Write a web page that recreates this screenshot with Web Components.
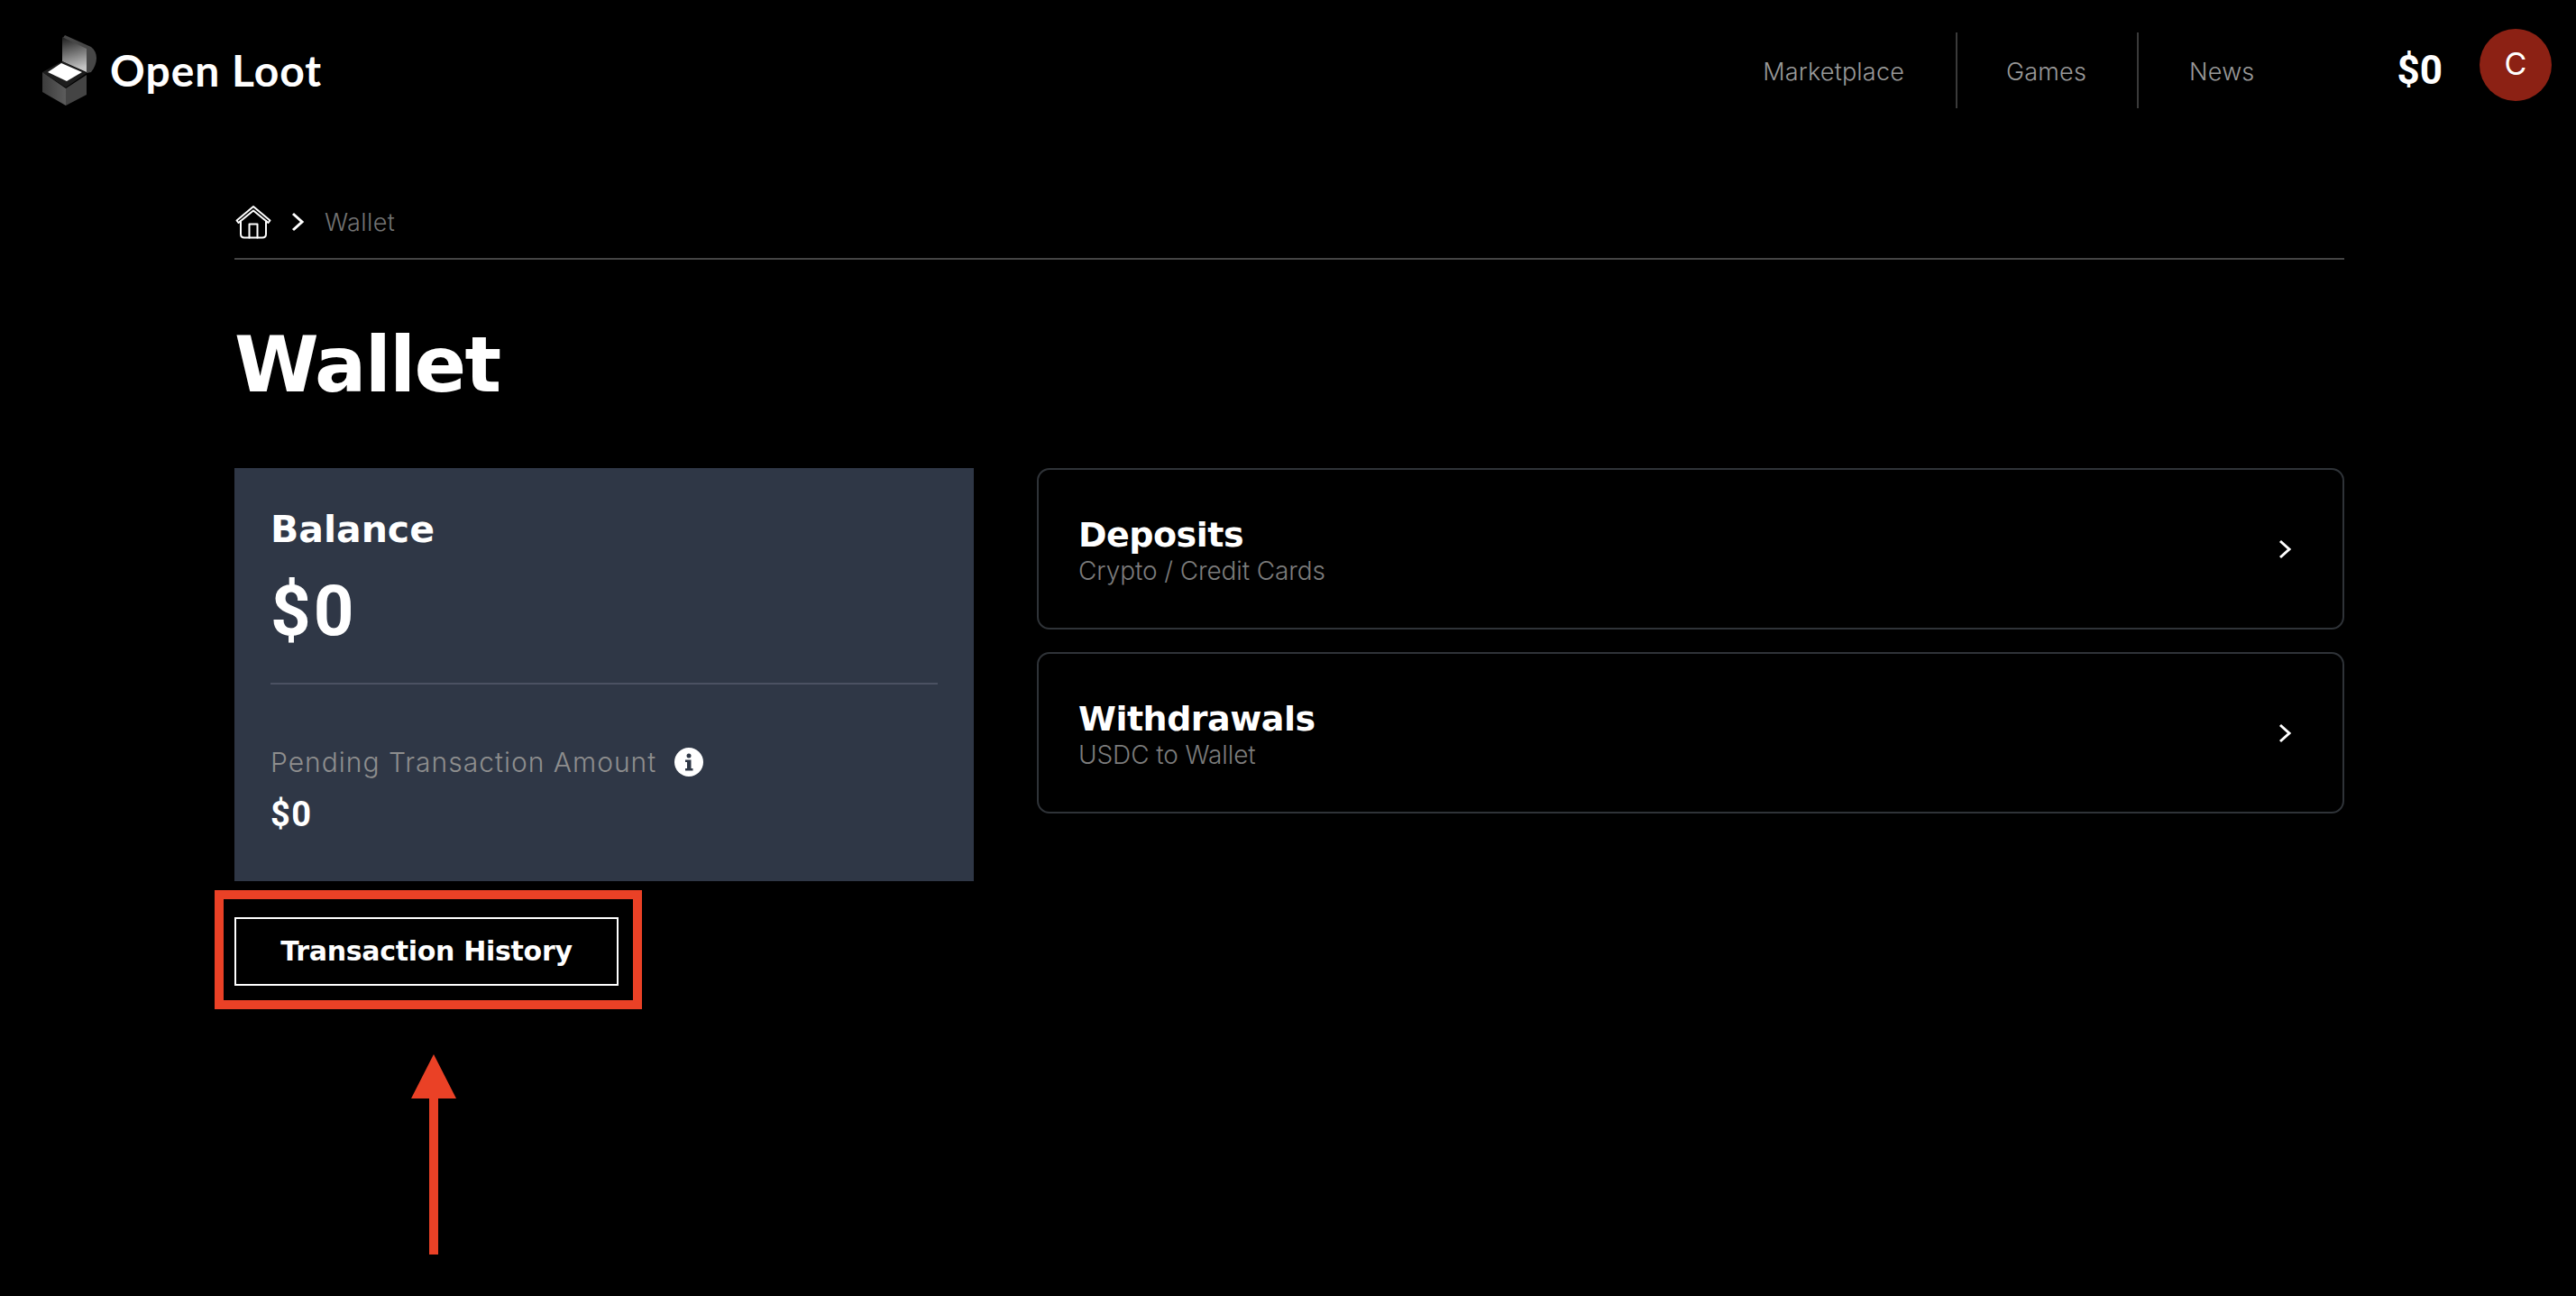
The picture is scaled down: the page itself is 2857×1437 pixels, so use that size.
<!DOCTYPE html>
<html>
<head>
<meta charset="utf-8">
<title>Wallet</title>
<style>
  html,body{margin:0;background:#000;}
  body{position:relative;min-height:1437px;overflow:hidden;font-family:"Inter","Liberation Sans",sans-serif;color:#fff;}
  .page{padding:0 257px 0 260px;}
  .columns{display:grid;grid-template-columns:820px 1fr;column-gap:70px;align-items:start;}
  .right{display:flex;flex-direction:column;gap:25px;}
</style>
</head>
<body>
<site-header></site-header>
<div class="page">
  <bread-crumb>Wallet</bread-crumb>
  <page-title>Wallet</page-title>
  <div class="columns">
    <div>
      <balance-card></balance-card>
      <tx-button>Transaction History</tx-button>
    </div>
    <div class="right">
      <wallet-link title="Deposits" sub="Crypto / Credit Cards"></wallet-link>
      <wallet-link title="Withdrawals" sub="USDC to Wallet"></wallet-link>
    </div>
  </div>
</div>
<call-out></call-out>

<script>
const chevron = `<svg width="15" height="22" viewBox="0 0 15 22" fill="none"><path d="M2 2l10 9-10 9" stroke="#fff" stroke-width="3"/></svg>`;

class SiteHeader extends HTMLElement {
    constructor(){
        super();
        this.attachShadow({mode:'open'});
        this.shadowRoot.innerHTML = `
        <style>
        :host{display:flex;align-items:center;height:156px;padding:0 27px 0 46px;box-sizing:border-box;}
        .logo{display:flex;align-items:center;gap:14px;}
        .logo svg{display:block;margin-top:-1px;}
        .name{font:700 48px/1 "Lato","Liberation Sans",sans-serif;letter-spacing:1px;color:#fff;margin-top:-1px;}
        nav{margin-left:auto;display:flex;align-items:center;height:84px;}
        nav a{display:flex;align-items:center;height:100%;padding:2px 56px 0;box-sizing:border-box;font:300 27px/1 "Inter",sans-serif;letter-spacing:.2px;color:#999;border-right:2px solid #3a3a3a;}
        nav a:first-child{padding-left:0;padding-right:57px;}
        nav a:nth-child(2){padding-left:54px;}
        nav a:last-child{border-right:0;padding-right:0;}
        .amount{margin-left:158px;font:700 44px/1 "Roboto",sans-serif;color:#fff;}
        .avatar{margin-left:41px;margin-top:-12px;width:80px;height:80px;border-radius:50%;background:#8c2114;color:#fff;display:flex;align-items:center;justify-content:center;font:400 34px/1 "Inter",sans-serif;padding-bottom:2px;box-sizing:border-box;}
        </style>
        <div class="logo">
          <svg width="62" height="80" viewBox="46 38 62 80">
            <defs>
              <linearGradient id="lid" x1="0" y1="0" x2="0.2" y2="1"><stop offset="0" stop-color="#1c1c1c"/><stop offset="1" stop-color="#c4c4c4"/></linearGradient>
              <linearGradient id="side" x1="0" y1="0" x2="1" y2="0"><stop offset="0" stop-color="#3c3c3c"/><stop offset="1" stop-color="#5c5c5c"/></linearGradient>
            </defs>
            <path d="M72 39 L101 52 C109 58 109 70 101 80 L96 81 V55 L69 43 Z" fill="#474747"/>
            <path d="M69 41 L96 54 V80 L69 68 Z" fill="url(#lid)"/>
            <path d="M47 80 L69 68 L96 81 L73 97 Z" fill="#1d1d1d"/>
            <path d="M53 80 L68 70 L91 80 L74 90 Z" fill="#fff"/>
            <path d="M47 80 L73 98 V117 L47 102 Z" fill="url(#side)"/>
            <path d="M73 98 L96 83 V105 L73 117 Z" fill="#444"/>
          </svg>
          <span class="name">Open Loot</span>
        </div>
        <nav><a>Marketplace</a><a>Games</a><a>News</a></nav>
        <span class="amount">$0</span>
        <span class="avatar">C</span>
        `;
    }
}

class BreadCrumb extends HTMLElement {
    constructor(){
        super();
        this.attachShadow({mode:'open'});
        this.shadowRoot.innerHTML = `
        <style>
        :host{display:flex;align-items:center;height:132px;padding:72px 0 22px;border-bottom:2px solid #444;box-sizing:border-box;}
        .home{display:block;margin-left:1px;}
        .sep{display:block;margin-left:22px;}
        .cur{margin-left:22px;font:300 27px/1 "Inter",sans-serif;letter-spacing:.4px;color:#737373;}
        </style>
        <svg class="home" width="40" height="38" viewBox="0 0 40 38" fill="none" stroke="#fff" stroke-width="2" stroke-linejoin="round" stroke-linecap="round">
          <path d="M1.5 17.5 L20 2 L38.5 17.5 L36.5 20 L20 6.5 L3.5 20 Z"/>
          <path d="M6 18 V32.5 Q6 36.5 10 36.5 H30 Q34 36.5 34 32.5 V18"/>
          <path d="M15.5 36.5 V21.5 H24.5 V36.5"/>
        </svg>
        <svg class="sep" width="15" height="22" viewBox="0 0 15 22" fill="none"><path d="M2 2l10 9-10 9" stroke="#fff" stroke-width="3"/></svg>
        <span class="cur"><slot></slot></span>
        `;
    }
}

class PageTitle extends HTMLElement {
    constructor(){
        super();
        this.attachShadow({mode:'open'});
        this.shadowRoot.innerHTML = `
        <style>
        :host{display:block;height:231px;padding-top:67px;box-sizing:border-box;}
        h1{margin:0;font:700 85px/100px "DejaVu Sans",sans-serif;letter-spacing:-1.7px;color:#fff;}
        </style>
        <h1><slot></slot></h1>
        `;
    }
}

class BalanceCard extends HTMLElement {
    constructor(){
        super();
        this.attachShadow({mode:'open'});
        this.shadowRoot.innerHTML = `
        <style>
        :host{display:block;height:458px;box-sizing:border-box;padding:0 40px;background:#2f3746;color:#fff;}
        .label{padding-top:43px;font:700 41px/50px "DejaVu Sans",sans-serif;}
        .big{margin-top:26px;font:700 78px/80px "Roboto",sans-serif;letter-spacing:3px;}
        hr{margin:39px 0 0;border:0;border-top:2px solid #4b5162;}
        .pending{display:flex;align-items:center;margin-top:68px;height:36px;font:300 30px/36px "Inter",sans-serif;letter-spacing:1px;color:#8e8e8e;}
        .pending svg{margin-left:20px;display:block;}
        .small{margin-top:20px;font:700 38px/40px "Roboto",sans-serif;letter-spacing:1.5px;}
        </style>
        <div class="label">Balance</div>
        <div class="big">$0</div>
        <hr>
        <div class="pending">Pending Transaction Amount
          <svg width="32" height="32" viewBox="0 0 32 32"><circle cx="16" cy="16" r="16" fill="#fff"/><path d="M13.5 13.5h5v9.5h2v2.5h-8.5V23h2v-7h-2v-2.5z" fill="#2f3746"/><circle cx="16" cy="9" r="2.5" fill="#2f3746"/></svg>
        </div>
        <div class="small">$0</div>
        `;
    }
}

class TxButton extends HTMLElement {
    constructor(){
        super();
        this.attachShadow({mode:'open'});
        this.shadowRoot.innerHTML = `
        <style>
        :host{display:flex;align-items:center;justify-content:center;width:426px;height:76px;margin-top:40px;box-sizing:border-box;border:2px solid #fff;font:700 30px/1 "DejaVu Sans",sans-serif;letter-spacing:-.3px;color:#fff;}
        </style>
        <slot></slot>
        `;
    }
}

class WalletLink extends HTMLElement {
    constructor(){
        super();
        this.attachShadow({mode:'open'});
        this.shadowRoot.innerHTML = `
        <style>
        :host{display:flex;align-items:center;height:179px;box-sizing:border-box;padding:0 56px 0 44px;border:2px solid #2f3338;border-radius:14px;}
        .text{flex:1;margin-top:2px;}
        .title{font:700 38px/46px "DejaVu Sans",sans-serif;letter-spacing:-.5px;color:#fff;}
        .sub{font:300 28px/34px "Inter",sans-serif;letter-spacing:-.1px;color:#7c7c7c;}
        svg{display:block;}
        </style>
        <div class="text">
          <div class="title">${this.getAttribute('title')}</div>
          <div class="sub">${this.getAttribute('sub')}</div>
        </div>
        ${chevron}
        `;
    }
}

class CallOut extends HTMLElement {
    constructor(){
        super();
        this.attachShadow({mode:'open'});
        this.shadowRoot.innerHTML = `
        <style>
        :host{position:absolute;left:0;top:0;pointer-events:none;}
        .box{position:absolute;left:238px;top:987px;width:474px;height:132px;box-sizing:border-box;border:10px solid #ea4126;}
        svg{position:absolute;left:456px;top:1169px;display:block;}
        </style>
        <div class="box"></div>
        <svg width="50" height="222" viewBox="0 0 50 222"><path d="M25 0L50 49H30V222H20V49H0Z" fill="#ea4126"/></svg>
        `;
    }
}

customElements.define('site-header', SiteHeader);
customElements.define('bread-crumb', BreadCrumb);
customElements.define('page-title', PageTitle);
customElements.define('balance-card', BalanceCard);
customElements.define('tx-button', TxButton);
customElements.define('wallet-link', WalletLink);
customElements.define('call-out', CallOut);
</script>
</body>
</html>
